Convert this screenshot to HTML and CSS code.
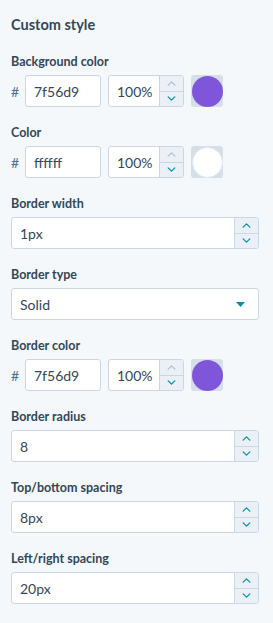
FILE: index.html
```html
<!DOCTYPE html>
<html>
<head>
<meta charset="utf-8">
<link rel="stylesheet" href="styles.css">
</head>
<body>
<div class="panel">
  <h2 class="title">Custom style</h2>

  <div class="field">
    <div class="label">Background color</div>
    <div class="color-row">
      <span class="hash">#</span>
      <div class="input hex">7f56d9</div>
      <div class="input num small">
        <span class="value">100%</span>
        <div class="spinner">
          <span class="arrow up disabled"><svg viewBox="0 0 10 6" width="10" height="6"><path d="M1 5 L5 1 L9 5" /></svg></span>
          <span class="arrow down"><svg viewBox="0 0 10 6" width="10" height="6"><path d="M1 1 L5 5 L9 1" /></svg></span>
        </div>
      </div>
      <div class="swatch"><span class="dot purple"></span></div>
    </div>
  </div>

  <div class="field">
    <div class="label">Color</div>
    <div class="color-row">
      <span class="hash">#</span>
      <div class="input hex">ffffff</div>
      <div class="input num small">
        <span class="value">100%</span>
        <div class="spinner">
          <span class="arrow up disabled"><svg viewBox="0 0 10 6" width="10" height="6"><path d="M1 5 L5 1 L9 5" /></svg></span>
          <span class="arrow down"><svg viewBox="0 0 10 6" width="10" height="6"><path d="M1 1 L5 5 L9 1" /></svg></span>
        </div>
      </div>
      <div class="swatch"><span class="dot white"></span></div>
    </div>
  </div>

  <div class="field">
    <div class="label">Border width</div>
    <div class="input num wide">
      <span class="value">1px</span>
      <div class="spinner">
        <span class="arrow up"><svg viewBox="0 0 10 6" width="10" height="6"><path d="M1 5 L5 1 L9 5" /></svg></span>
        <span class="arrow down"><svg viewBox="0 0 10 6" width="10" height="6"><path d="M1 1 L5 5 L9 1" /></svg></span>
      </div>
    </div>
  </div>

  <div class="field">
    <div class="label">Border type</div>
    <div class="input select">
      <span class="value">Solid</span>
      <svg class="caret" viewBox="0 0 9 5" width="9" height="5"><path d="M0 0 H9 L4.5 5 Z" /></svg>
    </div>
  </div>

  <div class="field">
    <div class="label">Border color</div>
    <div class="color-row">
      <span class="hash">#</span>
      <div class="input hex">7f56d9</div>
      <div class="input num small">
        <span class="value">100%</span>
        <div class="spinner">
          <span class="arrow up disabled"><svg viewBox="0 0 10 6" width="10" height="6"><path d="M1 5 L5 1 L9 5" /></svg></span>
          <span class="arrow down"><svg viewBox="0 0 10 6" width="10" height="6"><path d="M1 1 L5 5 L9 1" /></svg></span>
        </div>
      </div>
      <div class="swatch"><span class="dot purple"></span></div>
    </div>
  </div>

  <div class="field">
    <div class="label">Border radius</div>
    <div class="input num wide">
      <span class="value">8</span>
      <div class="spinner">
        <span class="arrow up"><svg viewBox="0 0 10 6" width="10" height="6"><path d="M1 5 L5 1 L9 5" /></svg></span>
        <span class="arrow down"><svg viewBox="0 0 10 6" width="10" height="6"><path d="M1 1 L5 5 L9 1" /></svg></span>
      </div>
    </div>
  </div>

  <div class="field">
    <div class="label">Top/bottom spacing</div>
    <div class="input num wide">
      <span class="value">8px</span>
      <div class="spinner">
        <span class="arrow up"><svg viewBox="0 0 10 6" width="10" height="6"><path d="M1 5 L5 1 L9 5" /></svg></span>
        <span class="arrow down"><svg viewBox="0 0 10 6" width="10" height="6"><path d="M1 1 L5 5 L9 1" /></svg></span>
      </div>
    </div>
  </div>

  <div class="field">
    <div class="label">Left/right spacing</div>
    <div class="input num wide">
      <span class="value">20px</span>
      <div class="spinner">
        <span class="arrow up"><svg viewBox="0 0 10 6" width="10" height="6"><path d="M1 5 L5 1 L9 5" /></svg></span>
        <span class="arrow down"><svg viewBox="0 0 10 6" width="10" height="6"><path d="M1 1 L5 5 L9 1" /></svg></span>
      </div>
    </div>
  </div>
</div>
</body>
</html>
```

FILE: styles.css
```css
* { box-sizing: border-box; }
html, body {
  margin: 0;
  padding: 0;
  background: #f5f8fa;
}
body {
  font-family: Lato, "Liberation Sans", sans-serif;
  color: #33475b;
  width: 273px;
  height: 623px;
  overflow: hidden;
}
.panel {
  padding: 15px 14px 0 11px;
  display: flex;
  flex-direction: column;
}
.title {
  margin: 0 0 19px 0;
  font-size: 14.5px;
  line-height: 20px;
  font-weight: 700;
  color: #33475b;
}
.field {
  display: flex;
  flex-direction: column;
  margin-bottom: 18px;
}
.label {
  font-size: 12.5px;
  line-height: 16px;
  font-weight: 700;
  margin-bottom: 5px;
  color: #33475b;
}
.color-row {
  display: flex;
  align-items: center;
  height: 32px;
}
.hash {
  width: 14px;
  font-size: 14px;
  color: #516f90;
}
.input {
  height: 32px;
  background: #fff;
  border: 1px solid #cbd6e2;
  border-radius: 3px;
  display: flex;
  align-items: center;
  font-size: 14px;
  color: #33475b;
  overflow: hidden;
}
.hex {
  width: 76px;
  padding-left: 8px;
}
.num .value, .select .value {
  flex: 1;
  padding-left: 8px;
}
.small {
  width: 76px;
  margin-left: 7px;
}
.wide, .select {
  width: 248px;
}
.spinner {
  width: 24px;
  height: 100%;
  display: flex;
  flex-direction: column;
  border-left: 1px solid #cbd6e2;
  background: #eaf0f6;
}
.arrow {
  flex: 1;
  display: flex;
  align-items: center;
  justify-content: center;
}
.arrow.up {
  border-bottom: 1px solid #cbd6e2;
}
.arrow svg {
  width: 9px;
  height: 5px;
}
.arrow path {
  fill: none;
  stroke: #0091ae;
  stroke-width: 1.5;
  stroke-linecap: round;
  stroke-linejoin: round;
}
.arrow.disabled path {
  stroke: #b0c1d4;
}
.select {
  padding-right: 13px;
}
.caret path {
  fill: #0091ae;
}
.swatch {
  width: 32px;
  height: 32px;
  margin-left: 7px;
  background: #d6dfe8;
  border-radius: 3px;
  display: flex;
  align-items: center;
  justify-content: center;
}
.dot {
  width: 31px;
  height: 31px;
  border-radius: 50%;
}
.dot.purple {
  background: #7f56d9;
}
.dot.white {
  background: #fff;
  border: 1px solid #e1e8ef;
}
```
